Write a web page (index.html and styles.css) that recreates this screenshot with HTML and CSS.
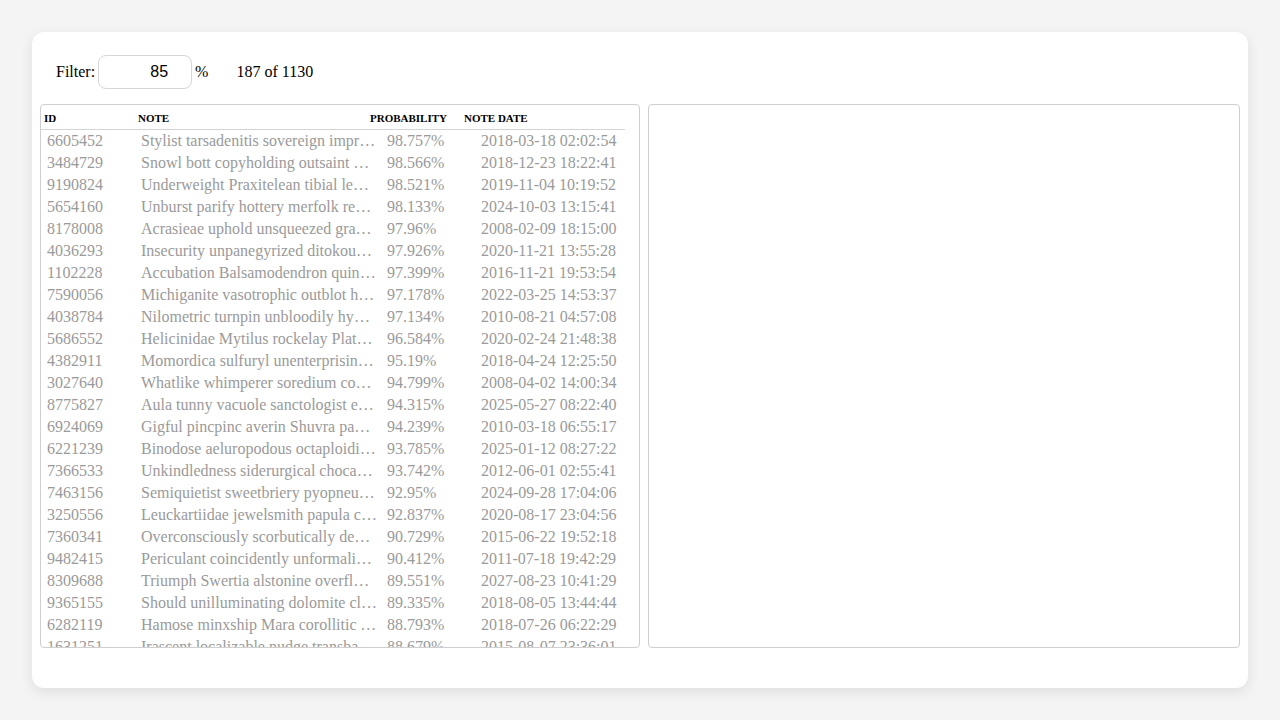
FILE: index.html
```html
<!DOCTYPE html>
<html lang="en">
<head>
    <meta charset="UTF-8">
    <meta name="viewport" content="width=device-width, initial-scale=1.0">
    <title>Notes</title>
    <link rel="stylesheet" href="styles.css">
</head>
<body>
    <div class="card">
        <div class="filter-bar">
            <label for="threshold">Filter:</label>
            <input class="threshold" id="threshold" type="text" value="85">
            <span class="unit">%</span>
            <span class="count">187 of 1130</span>
        </div>

        <div class="panels">
            <div class="panel list">
                <div class="head">
                    <span>ID</span>
                    <span>Note</span>
                    <span>Probability</span>
                    <span>Note date</span>
                </div>
                <div class="rows">
                    <div class="row"><span>6605452</span><span class="note">Stylist tarsadenitis sovereign impressionable</span><span>98.757%</span><span>2018-03-18 02:02:54</span></div>
                    <div class="row"><span>3484729</span><span class="note">Snowl bott copyholding outsaint Wyandot</span><span>98.566%</span><span>2018-12-23 18:22:41</span></div>
                    <div class="row"><span>9190824</span><span class="note">Underweight Praxitelean tibial lewdster</span><span>98.521%</span><span>2019-11-04 10:19:52</span></div>
                    <div class="row"><span>5654160</span><span class="note">Unburst parify hottery merfolk reanoint</span><span>98.133%</span><span>2024-10-03 13:15:41</span></div>
                    <div class="row"><span>8178008</span><span class="note">Acrasieae uphold unsqueezed gravelly</span><span>97.96%</span><span>2008-02-09 18:15:00</span></div>
                    <div class="row"><span>4036293</span><span class="note">Insecurity unpanegyrized ditokous pelf</span><span>97.926%</span><span>2020-11-21 13:55:28</span></div>
                    <div class="row"><span>1102228</span><span class="note">Accubation Balsamodendron quinquevalent</span><span>97.399%</span><span>2016-11-21 19:53:54</span></div>
                    <div class="row"><span>7590056</span><span class="note">Michiganite vasotrophic outblot hemol</span><span>97.178%</span><span>2022-03-25 14:53:37</span></div>
                    <div class="row"><span>4038784</span><span class="note">Nilometric turnpin unbloodily hymnwise</span><span>97.134%</span><span>2010-08-21 04:57:08</span></div>
                    <div class="row"><span>5686552</span><span class="note">Helicinidae Mytilus rockelay Platanista</span><span>96.584%</span><span>2020-02-24 21:48:38</span></div>
                    <div class="row"><span>4382911</span><span class="note">Momordica sulfuryl unenterprising gaw</span><span>95.19%</span><span>2018-04-24 12:25:50</span></div>
                    <div class="row"><span>3027640</span><span class="note">Whatlike whimperer soredium coxalgic</span><span>94.799%</span><span>2008-04-02 14:00:34</span></div>
                    <div class="row"><span>8775827</span><span class="note">Aula tunny vacuole sanctologist eyeful</span><span>94.315%</span><span>2025-05-27 08:22:40</span></div>
                    <div class="row"><span>6924069</span><span class="note">Gigful pincpinc averin Shuvra pawnage</span><span>94.239%</span><span>2010-03-18 06:55:17</span></div>
                    <div class="row"><span>6221239</span><span class="note">Binodose aeluropodous octaploidic rum</span><span>93.785%</span><span>2025-01-12 08:27:22</span></div>
                    <div class="row"><span>7366533</span><span class="note">Unkindledness siderurgical chocard amid</span><span>93.742%</span><span>2012-06-01 02:55:41</span></div>
                    <div class="row"><span>7463156</span><span class="note">Semiquietist sweetbriery pyopneumo</span><span>92.95%</span><span>2024-09-28 17:04:06</span></div>
                    <div class="row"><span>3250556</span><span class="note">Leuckartiidae jewelsmith papula cicatrix</span><span>92.837%</span><span>2020-08-17 23:04:56</span></div>
                    <div class="row"><span>7360341</span><span class="note">Overconsciously scorbutically demonstrable</span><span>90.729%</span><span>2015-06-22 19:52:18</span></div>
                    <div class="row"><span>9482415</span><span class="note">Periculant coincidently unformalized</span><span>90.412%</span><span>2011-07-18 19:42:29</span></div>
                    <div class="row"><span>8309688</span><span class="note">Triumph Swertia alstonine overflourish</span><span>89.551%</span><span>2027-08-23 10:41:29</span></div>
                    <div class="row"><span>9365155</span><span class="note">Should unilluminating dolomite clubby</span><span>89.335%</span><span>2018-08-05 13:44:44</span></div>
                    <div class="row"><span>6282119</span><span class="note">Hamose minxship Mara corollitic Wyclif</span><span>88.793%</span><span>2018-07-26 06:22:29</span></div>
                    <div class="row"><span>1631251</span><span class="note">Irascent localizable nudge transbaikal</span><span>88.679%</span><span>2015-08-07 23:36:01</span></div>
                    <div class="row"><span>2207415</span><span class="note">Orthodome unvirtuous pinnule cragged</span><span>88.412%</span><span>2013-02-11 07:14:39</span></div>
                </div>
            </div>
            <div class="panel detail"></div>
        </div>
    </div>
</body>
</html>
```

FILE: styles.css
```css
* {
    box-sizing: border-box;
}

html, body {
    height: 100%;
}

body {
    margin: 0;
    padding: 32px;
    background: #f4f4f4;
    font-family: "Liberation Serif", "Times New Roman", serif;
    font-size: 16px;
    color: #000;
}

.card {
    height: 100%;
    display: flex;
    flex-direction: column;
    background: #fff;
    border-radius: 12px;
    box-shadow: 0 4px 14px rgba(0, 0, 0, 0.09);
    padding: 23px 8px 40px;
}

/* filter row */
.filter-bar {
    display: flex;
    align-items: center;
    padding-left: 16px;
    margin-bottom: 15px;
}

.threshold {
    width: 94px;
    height: 34px;
    margin-left: 3px;
    padding: 0 23px 0 8px;
    border: 1px solid #d6d6d6;
    border-radius: 8px;
    font-family: "Liberation Sans", Arial, sans-serif;
    font-size: 16px;
    text-align: right;
    color: #000;
    outline: none;
}

.unit {
    margin-left: 3px;
}

.count {
    margin-left: 28px;
}

/* panels */
.panels {
    flex: 1;
    display: flex;
    gap: 8px;
    min-height: 0;
}

.panel {
    border: 1px solid #cfcfcf;
    border-radius: 4px;
    background: #fff;
    overflow: hidden;
}

.list {
    width: 600px;
    display: flex;
    flex-direction: column;
}

.detail {
    flex: 1;
}

.head {
    width: 584px;
    height: 25px;
    display: grid;
    grid-template-columns: 94px 232px 94px 1fr;
    align-items: center;
    padding: 1px 0 0 3px;
    border-bottom: 1px solid #d4d4d4;
    font-size: 11px;
    font-weight: bold;
    text-transform: uppercase;
}

.rows {
    flex: 1;
    overflow: hidden;
}

.row {
    height: 22px;
    display: grid;
    grid-template-columns: 94px 246px 94px 1fr;
    align-items: center;
    padding-left: 6px;
    color: #9a9a9a;
    white-space: nowrap;
}

.note {
    padding-right: 10px;
    overflow: hidden;
    text-overflow: ellipsis;
}
```
